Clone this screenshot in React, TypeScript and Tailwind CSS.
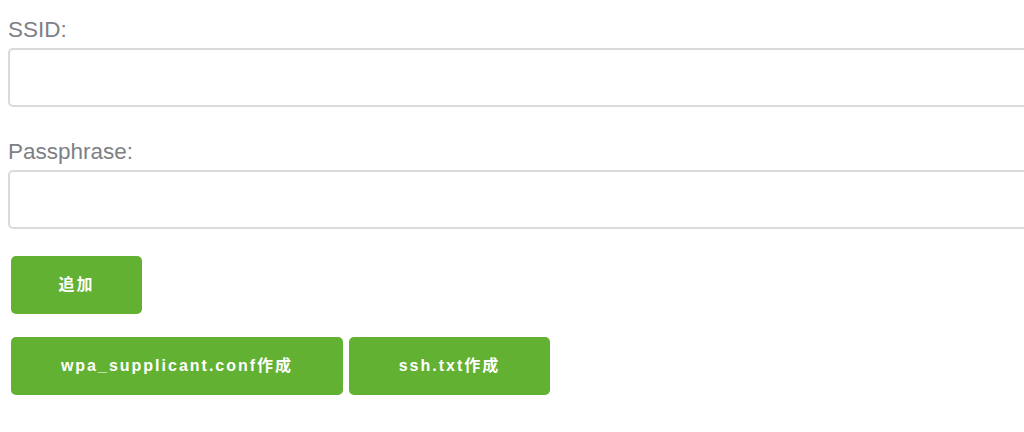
export default function App() {
  return (
    <div className="min-h-screen w-full overflow-hidden bg-white font-['Liberation_Sans','Noto_Sans_CJK_JP',sans-serif]">
      <div className="flex flex-col pl-2 pt-[15px]">
        {/* SSID */}
        <label className="h-[30px] text-[22.5px] leading-[30px] text-[#7d8084]">SSID:</label>
        <input
          type="text"
          className="mt-[3px] h-[59px] w-[1060px] rounded-[5px] border-2 border-[#dadada] bg-white px-3 outline-none"
        />

        {/* Passphrase */}
        <label className="mt-[30px] h-[30px] text-[22.5px] leading-[30px] text-[#7d8084]">Passphrase:</label>
        <input
          type="password"
          className="mt-[3px] h-[59px] w-[1060px] rounded-[5px] border-2 border-[#dadada] bg-white px-3 outline-none"
        />

        <div className="ml-[3px] mt-[27px] flex">
          <button className="h-[58px] w-[131px] rounded-[5px] bg-[#62b132] text-[16px] font-bold tracking-[2px] text-white">
            追加
          </button>
        </div>

        <div className="ml-[3px] mt-[23px] flex gap-[6px]">
          <button className="h-[58px] w-[332px] rounded-[5px] bg-[#62b132] text-[16px] font-bold tracking-[2px] text-white">
            wpa_supplicant.conf作成
          </button>
          <button className="h-[58px] w-[201px] rounded-[5px] bg-[#62b132] text-[16px] font-bold tracking-[2px] text-white">
            ssh.txt作成
          </button>
        </div>
      </div>
    </div>
  );
}
